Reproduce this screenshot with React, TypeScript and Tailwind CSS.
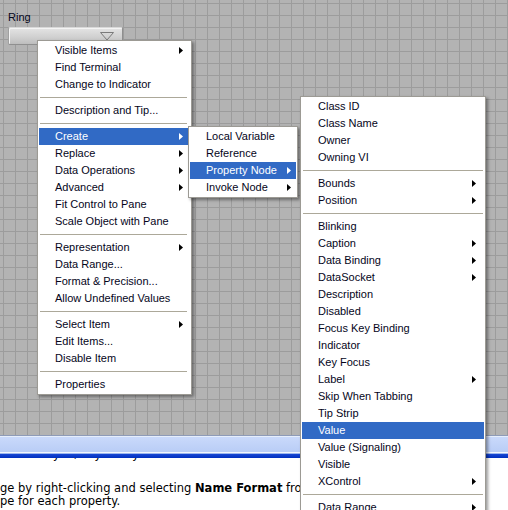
import React from "react";

type Item = { label?: string; sep?: boolean; sub?: boolean; active?: boolean };

const Arrow = ({ white }: { white?: boolean }) => (
  <svg width="4" height="7" viewBox="0 0 4 7" className="shrink-0">
    <path d="M0 0 L4 3.5 L0 7 Z" fill={white ? "#ffffff" : "#000000"} />
  </svg>
);

function Menu({
  items,
  className,
  itemPr,
}: {
  items: Item[];
  className: string;
  itemPr: string;
}) {
  return (
    <div
      className={
        "absolute bg-white border border-[#9c9a94] shadow-[2px_2px_3px_rgba(0,0,0,0.4)] py-px " +
        className
      }
    >
      {items.map((it, i) =>
        it.sep ? (
          <div key={i} className="h-[9px] flex items-center px-px">
            <div className="h-px w-full bg-[#aca899]" />
          </div>
        ) : (
          <div
            key={i}
            className={`h-[17px] flex items-center pl-4 ${itemPr} ${
              it.active ? "bg-[#316ac5] text-white" : "text-[#05051a]"
            }`}
          >
            <span className="flex-1 whitespace-nowrap leading-[17px]">{it.label}</span>
            {it.sub && <Arrow white={it.active} />}
          </div>
        )
      )}
    </div>
  );
}

const menu1: Item[] = [
  { label: "Visible Items", sub: true },
  { label: "Find Terminal" },
  { label: "Change to Indicator" },
  { sep: true },
  { label: "Description and Tip..." },
  { sep: true },
  { label: "Create", sub: true, active: true },
  { label: "Replace", sub: true },
  { label: "Data Operations", sub: true },
  { label: "Advanced", sub: true },
  { label: "Fit Control to Pane" },
  { label: "Scale Object with Pane" },
  { sep: true },
  { label: "Representation", sub: true },
  { label: "Data Range..." },
  { label: "Format & Precision..." },
  { label: "Allow Undefined Values" },
  { sep: true },
  { label: "Select Item", sub: true },
  { label: "Edit Items..." },
  { label: "Disable Item" },
  { sep: true },
  { label: "Properties" },
];

const menu2: Item[] = [
  { label: "Local Variable" },
  { label: "Reference" },
  { label: "Property Node", sub: true, active: true },
  { label: "Invoke Node", sub: true },
];

const menu3: Item[] = [
  { label: "Class ID" },
  { label: "Class Name" },
  { label: "Owner" },
  { label: "Owning VI" },
  { sep: true },
  { label: "Bounds", sub: true },
  { label: "Position", sub: true },
  { sep: true },
  { label: "Blinking" },
  { label: "Caption", sub: true },
  { label: "Data Binding", sub: true },
  { label: "DataSocket", sub: true },
  { label: "Description" },
  { label: "Disabled" },
  { label: "Focus Key Binding" },
  { label: "Indicator" },
  { label: "Key Focus" },
  { label: "Label", sub: true },
  { label: "Skip When Tabbing" },
  { label: "Tip Strip" },
  { label: "Value", active: true },
  { label: "Value (Signaling)" },
  { label: "Visible" },
  { label: "XControl", sub: true },
  { sep: true },
  { label: "Data Range", sub: true },
];

export default function App() {
  return (
    <div className="relative w-[508px] h-[510px] overflow-hidden bg-white font-['Liberation_Sans',Arial,sans-serif] text-[11px]">
      {/* front panel canvas */}
      <div className="h-[435px] bg-[#b3b3b3] bg-[image:linear-gradient(to_right,#9c9c9c_1px,transparent_1px),linear-gradient(to_bottom,#9c9c9c_1px,transparent_1px)] bg-[size:12px_12px] bg-[position:3px_3px] pt-[11px] pl-[8px]">
        <div className="leading-[13px] text-[#05051a]">Ring</div>
        <div className="mt-[3px] w-[115px] h-[18px] rounded-[2px] border border-[#8f8f8f] border-t-[#d8d8d8] border-l-[#a0a0a0] bg-[linear-gradient(to_bottom,#e4e4e4,#cfcfcf_60%,#bdbdbd)] shadow-[inset_1px_1px_0_#f4f4f4] flex items-center justify-end pr-[8px]">
          <svg width="14" height="9" viewBox="0 0 14 9">
            <path d="M0.5 0.5 H13.5 L7 8 Z" fill="none" stroke="#7a7a7a" strokeWidth="1" />
          </svg>
        </div>
      </div>

      {/* window band */}
      <div className="h-px bg-[#8e9bb8]" />
      <div className="h-px bg-[#e6eefc]" />
      <div className="h-[15px] bg-[linear-gradient(to_bottom,#c9d9fb,#b9cdf6)]" />
      <div className="h-px bg-[#f2f6fe]" />
      <div className="h-px bg-[#9db7ee]" />
      <div className="h-[4px] bg-[linear-gradient(to_bottom,#1a48d4,#0030c0)]" />

      {/* help text */}
      <div className="w-[300px] overflow-hidden font-['DejaVu_Sans',Verdana,sans-serif] text-[11.5px] text-black">
        <div className="h-[4px] overflow-hidden">
          <div className="-mt-[10px] leading-[13px] whitespace-nowrap pl-[53px]">
            <span>y</span>
            <span className="ml-[14px]">,</span>
            <span className="ml-[17px]">y</span>
            <span className="ml-[31px]">y</span>
          </div>
        </div>
        <div className="h-[20px]" />
        <div className="leading-[13px] whitespace-nowrap">
          ge by right-clicking and selecting <b>Name Format</b> fro
        </div>
        <div className="leading-[13px] whitespace-nowrap">pe for each property.</div>
      </div>

      <Menu items={menu1} className="left-[37px] top-[40px] w-[155px] pl-px pr-[3px]" itemPr="pr-[5px]" />
      <Menu items={menu2} className="left-[188px] top-[126px] w-[110px] pl-px pr-px" itemPr="pr-[5px]" />
      <Menu items={menu3} className="left-[300px] top-[96px] w-[186px] pl-px pr-px" itemPr="pr-[8px]" />
    </div>
  );
}
